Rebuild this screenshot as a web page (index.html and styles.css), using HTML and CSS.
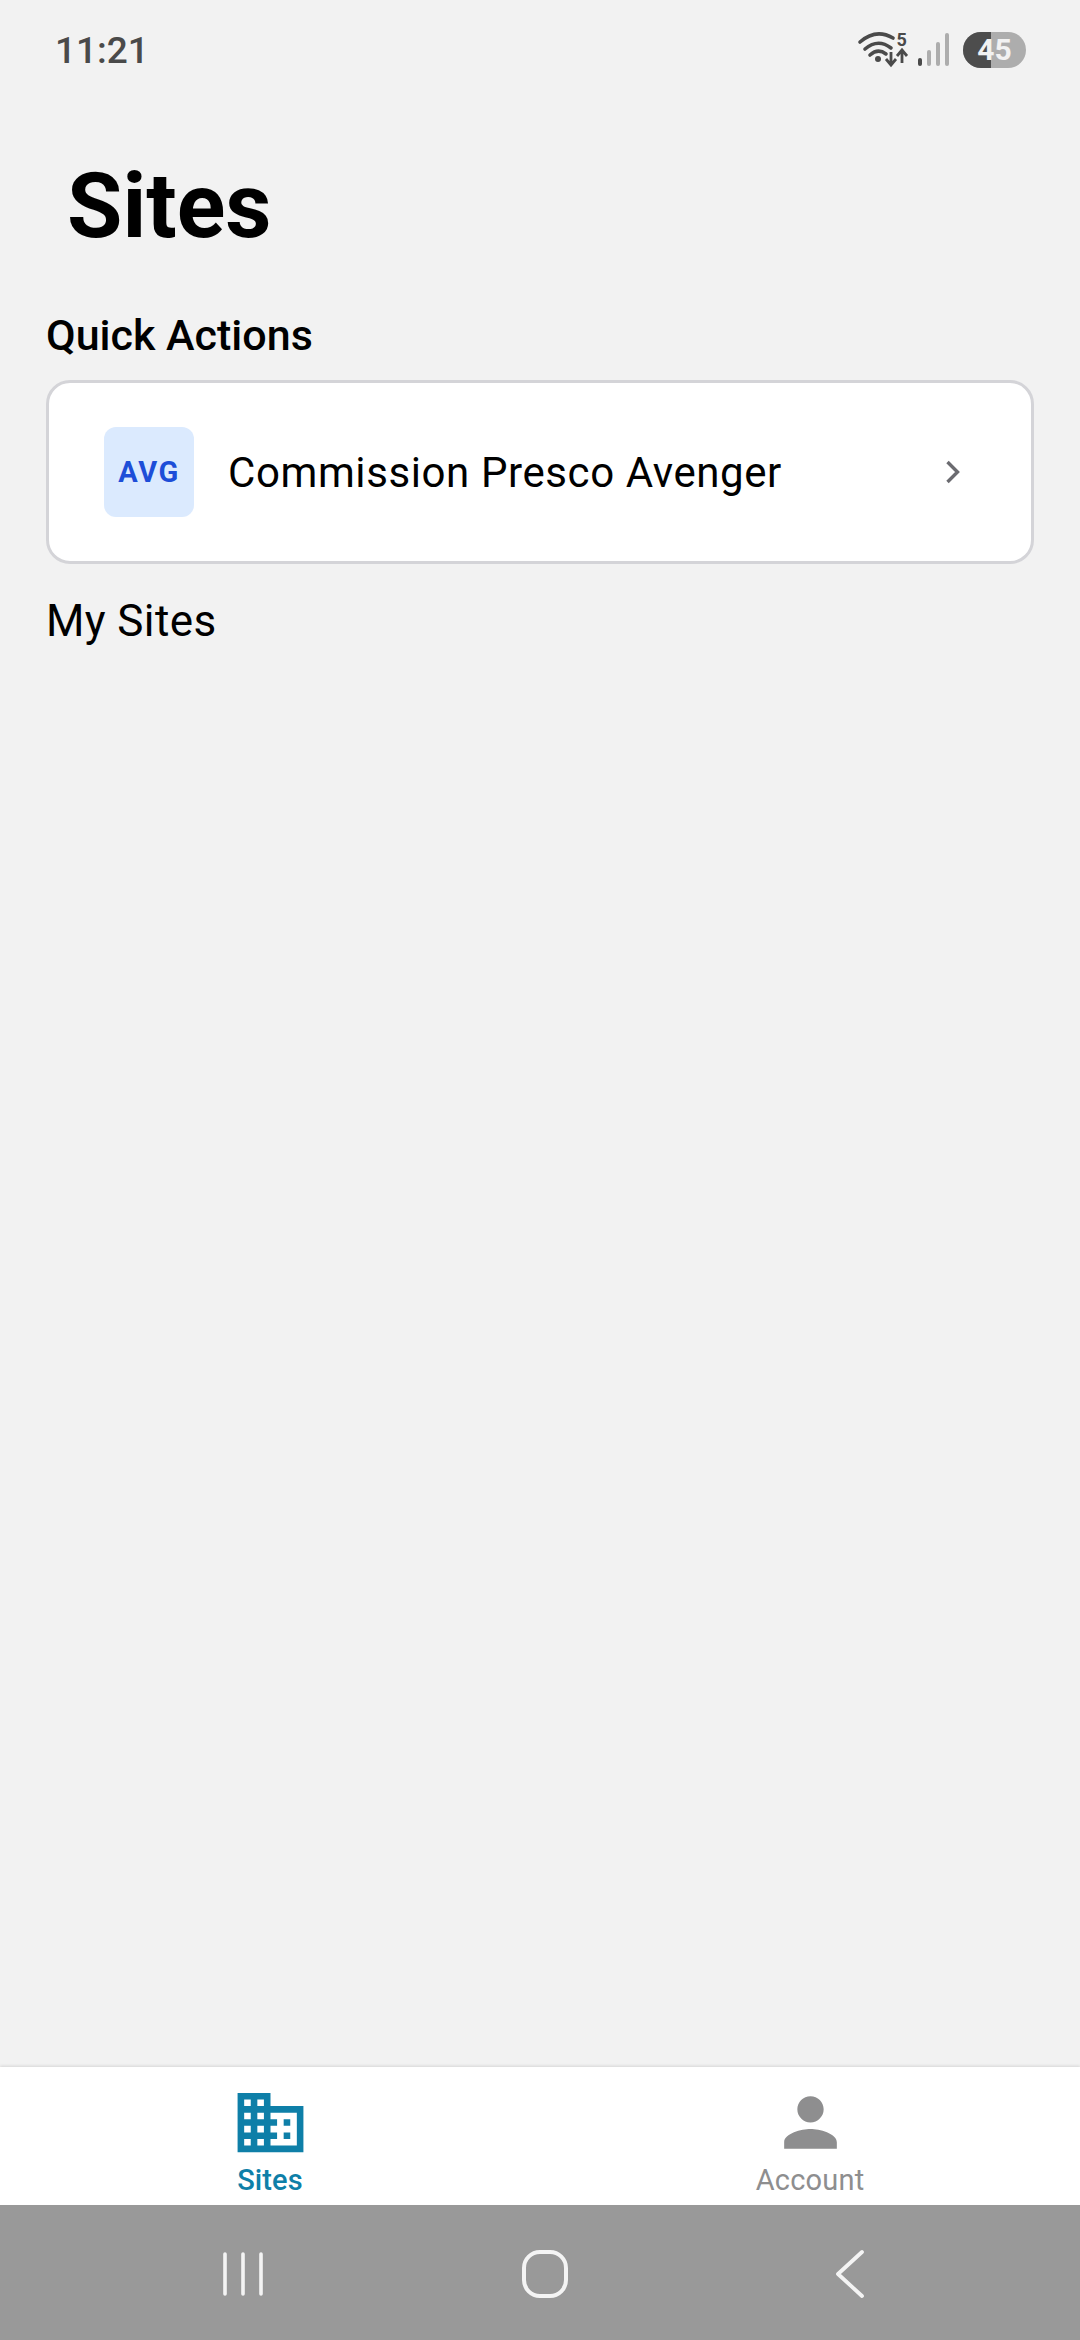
FILE: index.html
```html
<!DOCTYPE html>
<html lang="en">
<head>
<meta charset="utf-8">
<title>Sites</title>
<link rel="stylesheet" href="styles.css">
</head>
<body>
<div class="screen">
  <header class="status">
    <span class="time">11:21</span>
    <div class="status-icons">
      <svg class="wifi" width="52" height="44" viewBox="0 0 52 44" aria-hidden="true">
        <g fill="none" stroke="#4a4a4a" stroke-width="3.600" stroke-linecap="round">
          <path d="M4 14Q20 0 37 10"/>
          <path d="M9 21Q22 10 35 20"/>
          <path d="M14 27Q22 20 30 26"/>
        </g>
        <circle cx="22" cy="31" r="3" fill="#4a4a4a"/>
        <g fill="none" stroke="#4a4a4a" stroke-width="2.800">
          <path d="M35 24V36M30 31L35 37L40 31"/>
          <path d="M46 35V23M41 28L46 22L51 28"/>
        </g>
        <text class="wifi-five" x="40.500" y="18">5</text>
      </svg>
      <svg class="signal" width="34" height="34" viewBox="0 0 34 34" aria-hidden="true">
        <g stroke="#adadad" stroke-width="4" stroke-linecap="round">
          <path d="M4 27V31" stroke="#4a4a4a"/>
          <path d="M13 19V31"/>
          <path d="M22 11V31"/>
          <path d="M31 2V31"/>
        </g>
      </svg>
      <div class="battery"><span class="battery-level"></span><span class="battery-text">45</span></div>
    </div>
  </header>

  <main class="content">
    <h1 class="title">Sites</h1>
    <h2 class="section-title">Quick Actions</h2>
    <div class="card">
      <div class="badge">AVG</div>
      <span class="card-label">Commission Presco Avenger</span>
      <svg class="chevron" width="16" height="24" viewBox="0 0 16 24" aria-hidden="true">
        <path d="M2.500 2L12.500 12L2.500 22" fill="none" stroke="#6b6b70" stroke-width="3.400"/>
      </svg>
    </div>
    <h2 class="section-plain">My Sites</h2>
  </main>

  <nav class="tabs">
    <div class="tab tab-active">
      <svg class="tab-icon" viewBox="0 0 24 24" aria-hidden="true"><path fill="#0e7fa8" d="M12 7V3H2v18h20V7H12zM6 19H4v-2h2v2zm0-4H4v-2h2v2zm0-4H4V9h2v2zm0-4H4V5h2v2zm4 12H8v-2h2v2zm0-4H8v-2h2v2zm0-4H8V9h2v2zm0-4H8V5h2v2zm10 12h-8v-2h2v-2h-2v-2h2v-2h-2V9h8v10zm-2-8h-2v2h2v-2zm0 4h-2v2h2v-2z"/></svg>
      <span class="tab-label">Sites</span>
    </div>
    <div class="tab">
      <svg class="tab-icon" viewBox="0 0 24 24" aria-hidden="true"><path fill="#8e8e8f" d="M12 12c2.210 0 4-1.790 4-4s-1.790-4-4-4-4 1.790-4 4 1.790 4 4 4zm0 2c-2.670 0-8 1.340-8 4v2h16v-2c0-2.660-5.330-4-8-4z"/></svg>
      <span class="tab-label">Account</span>
    </div>
  </nav>

  <footer class="sysnav">
    <svg class="sys-recents" width="46" height="46" viewBox="0 0 46 46" aria-hidden="true">
      <g stroke="#f4f4f4" stroke-width="3.600" stroke-linecap="round"><path d="M5 3V43M23 3V43M41 3V43"/></g>
    </svg>
    <svg class="sys-home" width="48" height="50" viewBox="0 0 48 50" aria-hidden="true">
      <rect x="3" y="3" width="42" height="44" rx="16" fill="none" stroke="#f4f4f4" stroke-width="4"/>
    </svg>
    <svg class="sys-back" width="34" height="50" viewBox="0 0 34 50" aria-hidden="true">
      <path d="M29 3L5 25L29 47" fill="none" stroke="#f4f4f4" stroke-width="3.800" stroke-linecap="round" stroke-linejoin="round"/>
    </svg>
  </footer>
</div>
</body>
</html>
```
FILE: styles.css
```css
* { box-sizing: border-box; }
html, body { margin: 0; padding: 0; }
body { font-family: Roboto, "Liberation Sans", sans-serif; background: #f2f2f2; }
.screen { width: 1080px; height: 2340px; display: flex; flex-direction: column; background: #f2f2f2; overflow: hidden; }

.status { height: 100px; flex: none; display: flex; align-items: center; justify-content: space-between; padding: 0 54px 0 55px; }
.time { font-size: 37px; font-weight: 500; color: #4a4a4a; line-height: 1; }
.status-icons { display: flex; align-items: center; }
.wifi { display: block; overflow: visible; }
.wifi-five { font: 700 18px Roboto, sans-serif; fill: #4a4a4a; }
.signal { display: block; margin-left: 8px; margin-right: 13px; }
.battery { position: relative; width: 63px; height: 36px; border-radius: 18px; background: #adadad; overflow: hidden; display: flex; align-items: center; justify-content: center; }
.battery-level { position: absolute; left: 0; top: 0; bottom: 0; width: 28px; background: #4d4d4d; }
.battery-text { position: relative; font-size: 30px; font-weight: 700; color: #f2f2f2; line-height: 1; }

.content { flex: 1; padding: 0 46px; display: flex; flex-direction: column; }
.title { margin: 57px 0 0 21px; font-size: 90px; line-height: 100px; font-weight: 700; color: #000; }
.section-title { margin: 54px 0 0; font-size: 43px; line-height: 48px; font-weight: 500; color: #000; }
.card { margin-top: 21px; height: 184px; background: #fff; border: 3px solid #d4d4d8; border-radius: 24px; display: flex; align-items: center; padding: 0 70px 0 55px; }
.badge { width: 90px; height: 90px; flex: none; border-radius: 12px; background: #dbeafe; color: #1d4ed8; font-size: 29px; font-weight: 700; letter-spacing: 1.500px; display: flex; align-items: center; justify-content: center; }
.card-label { flex: 1; margin-left: 34px; font-size: 42px; letter-spacing: .6px; color: #000; }
.chevron { display: block; flex: none; }
.section-plain { margin: 31px 0 0; font-size: 44px; letter-spacing: .4px; line-height: 52px; font-weight: 400; color: #000; }

.tabs { height: 138px; flex: none; display: flex; background: #fff; box-shadow: 0 -1px 3px rgba(0,0,0,.12); position: relative; }
.tab { flex: 1; display: flex; flex-direction: column; align-items: center; padding-top: 16px; color: #8e8e8f; }
.tab-icon { width: 79px; height: 79px; display: block; }
.tab-label { font-size: 29px; line-height: 36px; font-weight: 400; letter-spacing: .2px; }
.tab-active { color: #0e7fa8; }
.tab-active .tab-label { font-weight: 500; letter-spacing: .1px; }

.sysnav { height: 135px; flex: none; background: #999; display: flex; align-items: center; padding-top: 2px; position: relative; }
.sysnav svg { display: block; flex: none; }
.sys-recents { margin-left: 220px; }
.sys-home { margin-left: 255px; }
.sys-back { margin-left: 264px; }
```
